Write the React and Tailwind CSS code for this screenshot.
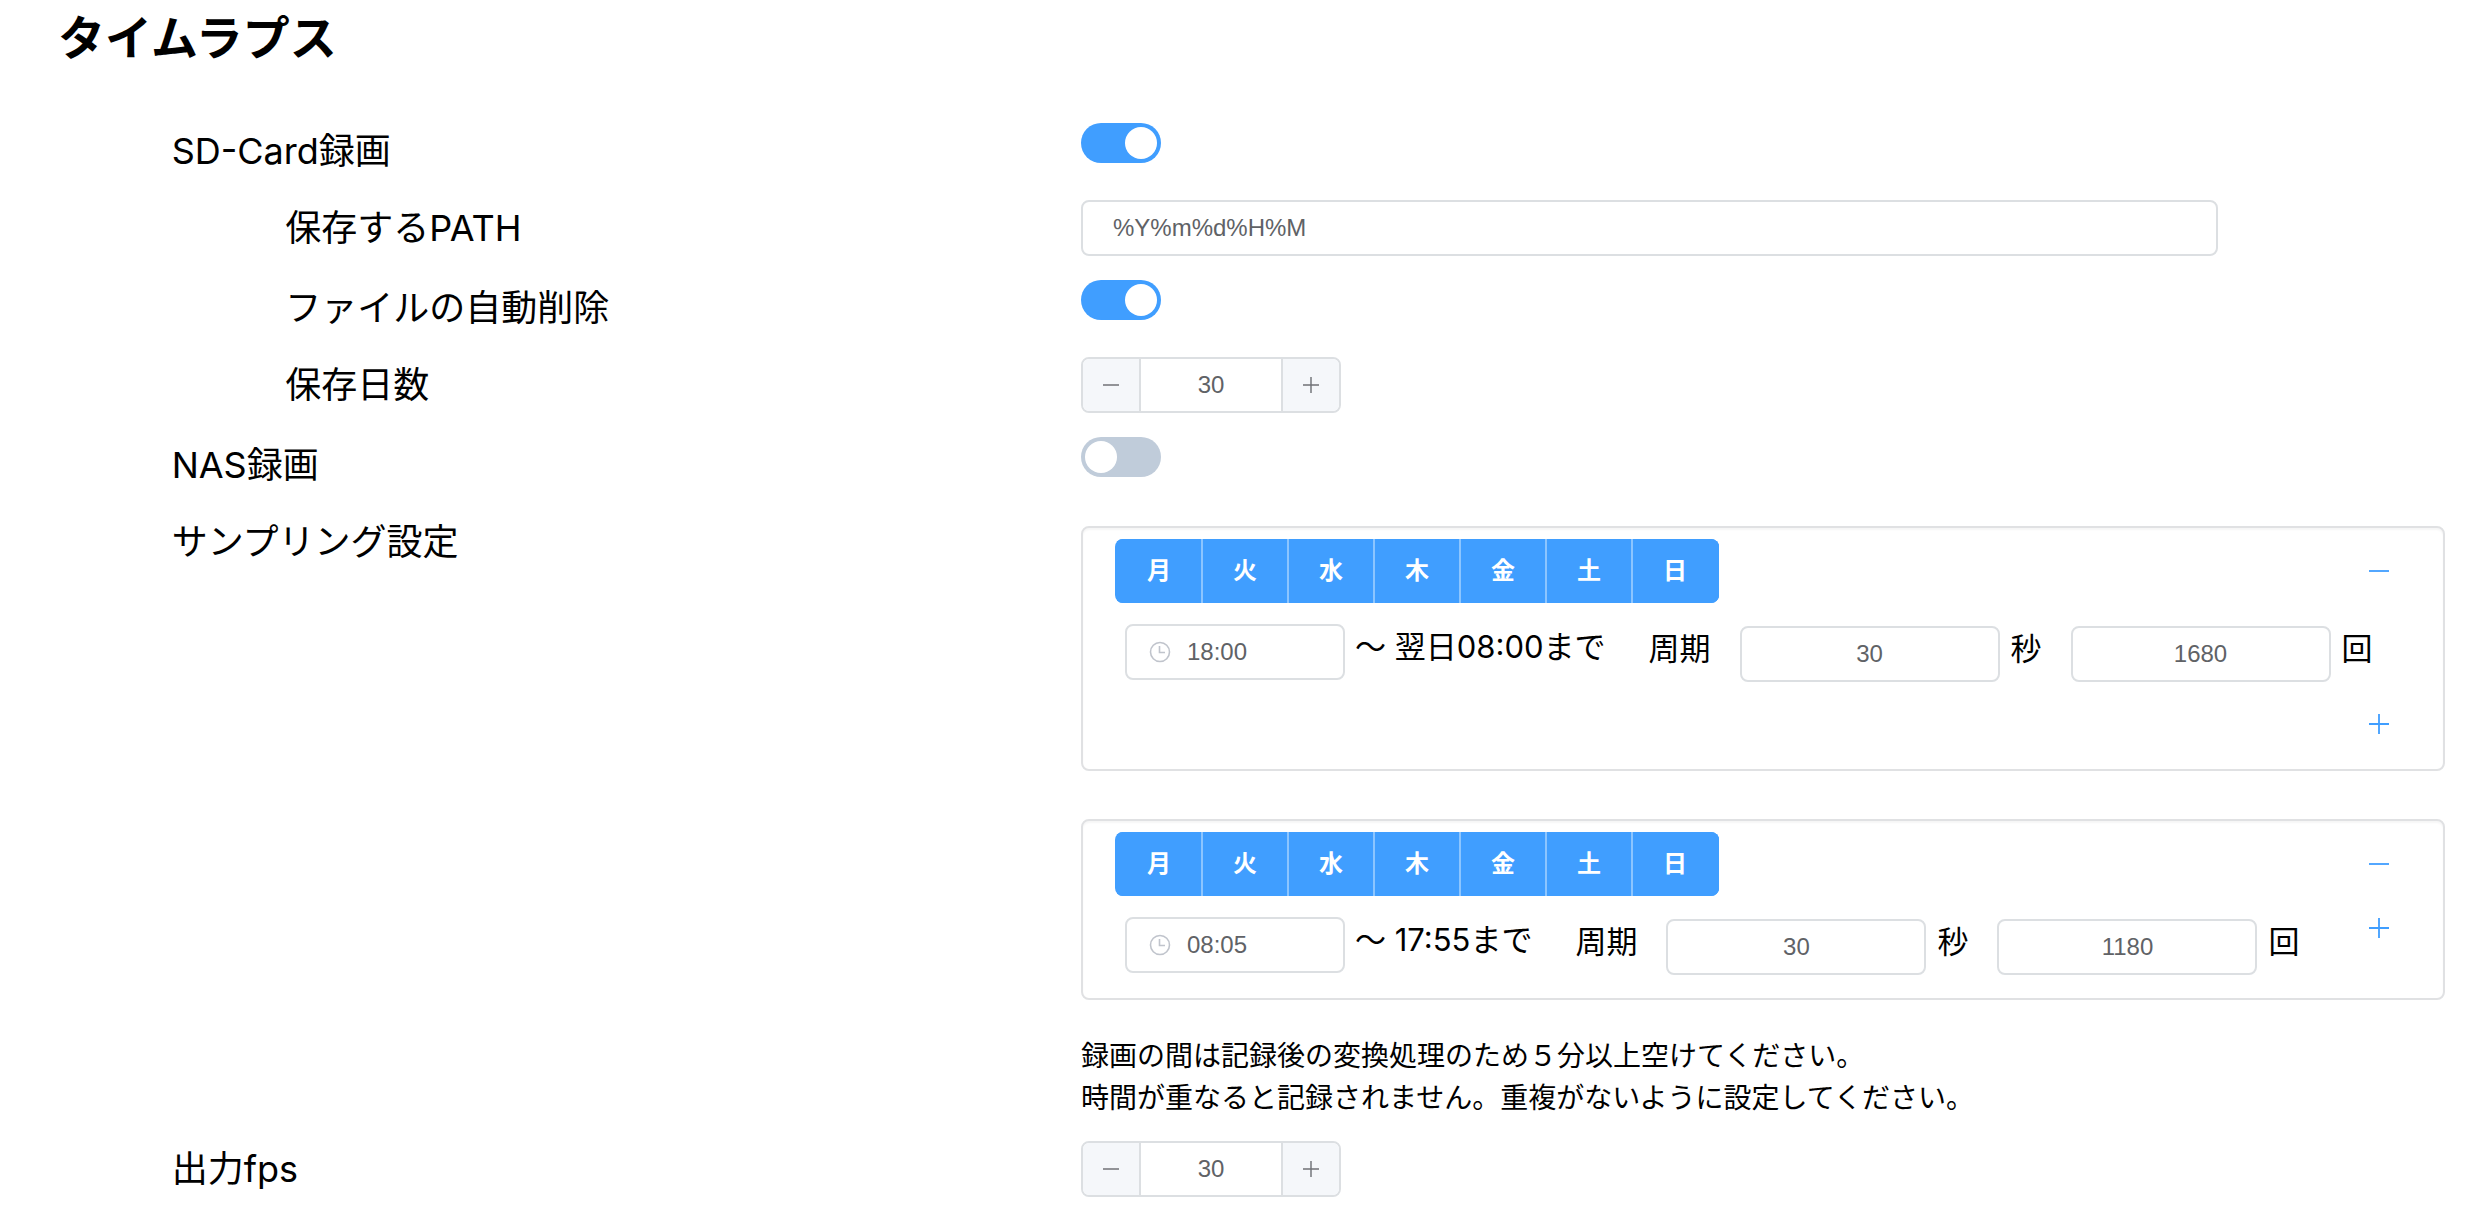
import React, { useState } from 'react';

const DAYS = ['月', '火', '水', '木', '金', '土', '日'];

const SCHEDULES = [
  { id: 1, start: '18:00', end: '〜 翌日08:00まで', interval: '30', count: '1680' },
  { id: 2, start: '08:05', end: '〜 17:55まで', interval: '30', count: '1180' },
];

const FIELD = 'h-14 rounded-lg border-2 border-[#dcdfe2] bg-white font-["Liberation_Sans",sans-serif] text-2xl text-[#606266] outline-none';

function MinusIcon({ size = 20 }) {
  return (
    <svg width={size} height={size} viewBox="0 0 20 20" fill="none" stroke="currentColor" strokeWidth="1.8" aria-hidden="true">
      <path d="M0 10h20" />
    </svg>
  );
}

function PlusIcon({ size = 20 }) {
  return (
    <svg width={size} height={size} viewBox="0 0 20 20" fill="none" stroke="currentColor" strokeWidth="1.8" aria-hidden="true">
      <path d="M0 10h20M10 0v20" />
    </svg>
  );
}

function ClockIcon() {
  return (
    <svg className="shrink-0 text-[#c0c4cc]" width="22" height="22" viewBox="0 0 22 22" fill="none" stroke="currentColor" strokeWidth="1.6" aria-hidden="true">
      <circle cx="11" cy="11" r="9.5" />
      <path d="M10.5 5v6.5H16" />
    </svg>
  );
}

function Row({ label, htmlFor, nested, children }) {
  return (
    <div className="grid grid-cols-[repeat(21,minmax(0,1fr))]">
      <label
        htmlFor={htmlFor}
        className={`${nested ? 'col-start-3 col-end-10' : 'col-start-2 col-end-10'} text-4xl leading-14`}
      >
        {label}
      </label>
      {children}
    </div>
  );
}

function Switch({ id, defaultChecked }) {
  return (
    <input
      id={id}
      type="checkbox"
      role="switch"
      defaultChecked={defaultChecked}
      className="flex h-10 w-20 cursor-pointer appearance-none items-center rounded-full bg-[#c0ccda] p-1 before:size-8 before:rounded-full before:bg-white checked:justify-end checked:bg-[#409eff]"
    />
  );
}

function Stepper({ id, initial }) {
  const [value, setValue] = useState(initial);

  return (
    <div className="flex h-14 w-65 overflow-hidden rounded-lg border-2 border-[#dcdfe2] text-[#707276]">
      <button
        type="button"
        aria-label="減らす"
        onClick={() => setValue(value - 1)}
        className="flex w-[58px] items-center justify-center border-r-2 border-[#dcdfe2] bg-[#f5f7fa]"
      >
        <MinusIcon size={16} />
      </button>
      <input
        id={id}
        type="text"
        value={value}
        onChange={(e) => setValue(Number(e.target.value) || 0)}
        className="min-w-0 flex-1 bg-white text-center font-['Liberation_Sans',sans-serif] text-2xl text-[#606266] outline-none"
      />
      <button
        type="button"
        aria-label="増やす"
        onClick={() => setValue(value + 1)}
        className="flex w-[58px] items-center justify-center border-l-2 border-[#dcdfe2] bg-[#f5f7fa]"
      >
        <PlusIcon size={16} />
      </button>
    </div>
  );
}

function DayPicker() {
  const [selected, setSelected] = useState(DAYS);

  const toggle = (day) => {
    setSelected(selected.includes(day) ? selected.filter((d) => d !== day) : [...selected, day]);
  };

  return (
    <div className="flex h-16 overflow-hidden rounded-lg bg-[#409eff] pl-0.5">
      {DAYS.map((day) => (
        <button
          key={day}
          type="button"
          aria-pressed={selected.includes(day)}
          onClick={() => toggle(day)}
          className="box-content w-[84px] border-r-2 border-[#8cc5ff] bg-[#409eff] text-2xl font-bold text-white last:border-[#409eff] aria-[pressed=false]:bg-white aria-[pressed=false]:text-[#606266]"
        >
          {day}
        </button>
      ))}
    </div>
  );
}

function ScheduleCard({ schedule }) {
  const { id, start, end, interval, count } = schedule;

  return (
    <div className="rounded-lg border-2 border-[#e0e1e3] px-8 pt-[11px] pb-[13px] shadow-[inset_0_2px_2px_rgba(0,0,0,0.04)]">
      <div className="flex items-center justify-between">
        <DayPicker />
        <button type="button" aria-label="削除" className="flex h-16 w-16 items-center justify-center text-[#409eff]">
          <MinusIcon />
        </button>
      </div>
      <div className="flex flex-wrap items-start">
        <div className="flex h-[89px] items-start pt-[21px] pl-[10px] text-[31px]">
          <div className={`${FIELD} flex w-55 items-center pl-[22px]`}>
            <ClockIcon />
            <input
              type="text"
              aria-label="開始時刻"
              defaultValue={start}
              className="ml-4 w-full min-w-0 bg-transparent outline-none"
            />
          </div>
          <span className="ml-[10px] leading-[46px] whitespace-nowrap">{end}</span>
          <label htmlFor={`interval-${id}`} className="ml-[43px] leading-[50px] whitespace-nowrap">周期</label>
          <input id={`interval-${id}`} type="text" defaultValue={interval} className={`${FIELD} mt-0.5 ml-[29px] w-65 text-center`} />
          <label htmlFor={`count-${id}`} className="ml-[11px] leading-[50px]">秒</label>
          <input id={`count-${id}`} type="text" defaultValue={count} className={`${FIELD} mt-0.5 ml-[29px] w-65 text-center`} />
          <span className="ml-[11px] leading-[50px]">回</span>
        </div>
        {/* drops to its own line when the row above is too wide */}
        <button type="button" aria-label="追加" className="ml-auto flex h-16 w-16 items-center justify-center text-[#409eff]">
          <PlusIcon />
        </button>
      </div>
    </div>
  );
}

export default function App() {
  return (
    <main className="bg-white pr-[45px] pb-5 pl-[58px] font-[Inter,'Noto_Sans_CJK_JP',sans-serif] text-black" lang="ja">
      <h2 className="pt-1 text-[47px] leading-[68px] font-bold">タイムラプス</h2>

      <form className="mt-[51px] flex flex-col" onSubmit={(e) => e.preventDefault()}>
        <Row label="SD-Card録画" htmlFor="sd-card">
          <div className="col-span-12 h-[77px]">
            <Switch id="sd-card" defaultChecked />
          </div>
        </Row>
        <Row label="保存するPATH" htmlFor="save-path" nested>
          <div className="col-span-10 h-20">
            <input id="save-path" type="text" defaultValue="%Y%m%d%H%M" className={`${FIELD} w-full px-[30px]`} />
          </div>
        </Row>
        <Row label="ファイルの自動削除" htmlFor="auto-delete" nested>
          <div className="col-span-12 h-[77px]">
            <Switch id="auto-delete" defaultChecked />
          </div>
        </Row>
        <Row label="保存日数" htmlFor="keep-days" nested>
          <div className="col-span-12 h-20">
            <Stepper id="keep-days" initial={30} />
          </div>
        </Row>
        <Row label="NAS録画" htmlFor="nas">
          <div className="col-span-12 h-[77px]">
            <Switch id="nas" />
          </div>
        </Row>
        <Row label="サンプリング設定" htmlFor="interval-1">
          <div className="col-span-12 pt-3 pb-[22px]">
            <div className="flex flex-col gap-12">
              {SCHEDULES.map((schedule) => (
                <ScheduleCard key={schedule.id} schedule={schedule} />
              ))}
            </div>
            <p className="mt-[35px] text-[28px] leading-[42px]">
              録画の間は記録後の変換処理のため５分以上空けてください。
              <br />
              時間が重なると記録されません。重複がないように設定してください。
            </p>
          </div>
        </Row>
        <Row label="出力fps" htmlFor="fps">
          <div className="col-span-12">
            <Stepper id="fps" initial={30} />
          </div>
        </Row>
      </form>
    </main>
  );
}
